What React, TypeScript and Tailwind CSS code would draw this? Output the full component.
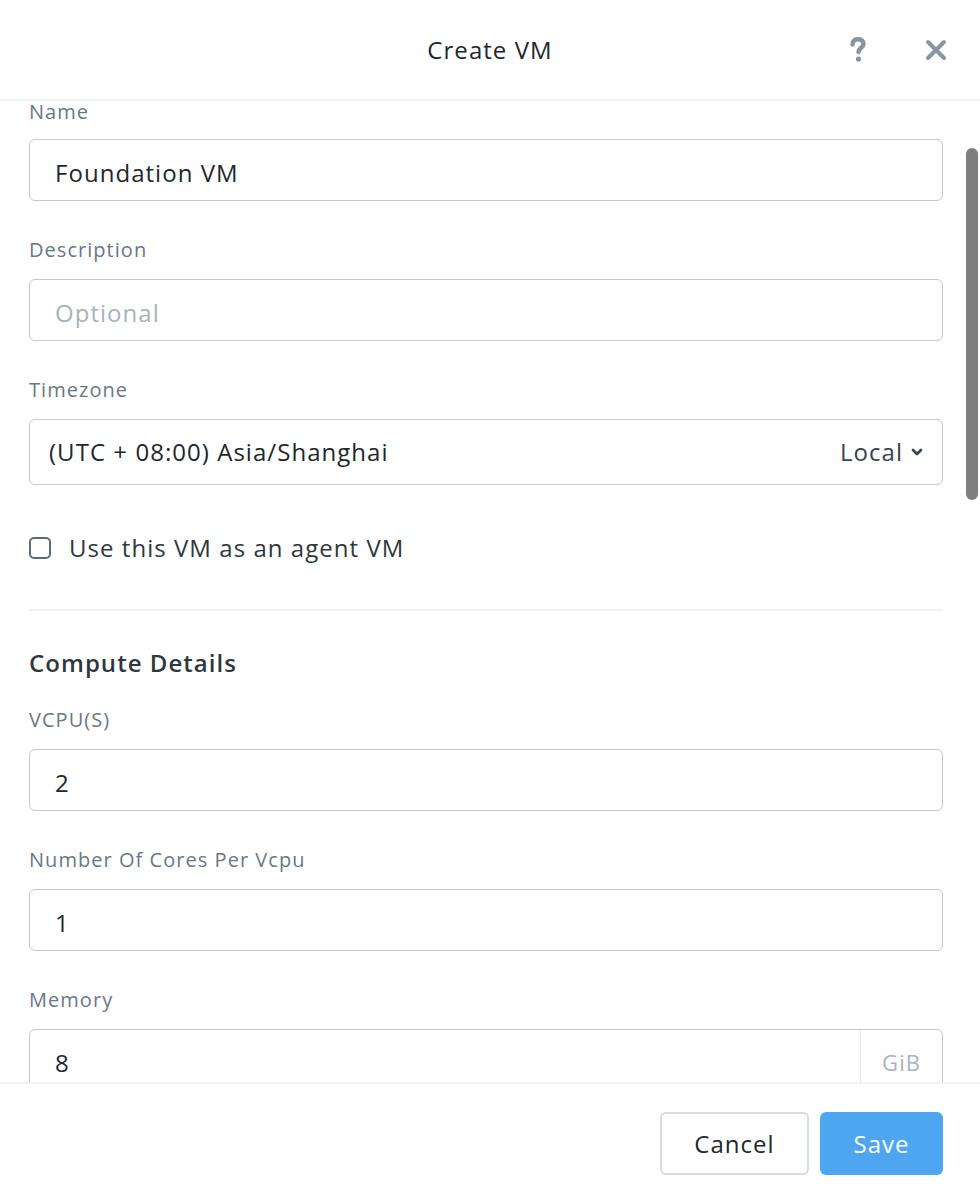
import { ChevronDown } from "lucide-react";

const font = { fontFamily: "'Open Sans', Lato, sans-serif" };

function Label({ children, tight }: { children: React.ReactNode; tight?: boolean }) {
  return (
    <div className={`text-[20px] text-[#6b7785] ${tight ? "leading-[22px]" : "leading-6"}`}>
      {children}
    </div>
  );
}

function Field({
  label,
  value,
  placeholder,
  suffix,
  first,
  className = "mt-[37px]",
}: {
  label: string;
  value?: string;
  placeholder?: string;
  suffix?: string;
  first?: boolean;
  className?: string;
}) {
  return (
    <div className={first ? "" : className}>
      <Label tight={first}>{label}</Label>
      <div
        className={`${first ? "mt-[16px]" : "mt-[17px]"} flex h-[62px] items-center rounded-md border border-[#c3c8cf] bg-white`}
      >
        <div className="flex-1 px-[25px] pt-[5px] text-[24px]">
          {value ? (
            <span className="text-[#22272e]">{value}</span>
          ) : (
            <span className="text-[#aab2bc]">{placeholder}</span>
          )}
        </div>
        {suffix && (
          <div className="flex h-full items-center border-l border-[#e3e6ea] px-[21px] pt-[5px] text-[22px] text-[#aab2bc]">
            {suffix}
          </div>
        )}
      </div>
    </div>
  );
}

export default function App() {
  return (
    <div
      style={font}
      className="flex h-[1184px] w-[980px] flex-col bg-white tracking-[0.065em] text-[#22272e]"
    >
      {/* Header */}
      <div className="relative flex h-[101px] shrink-0 items-center justify-center border-b-2 border-[#f1f2f4]">
        <h1 className="text-[24px] text-[#22272e]">Create VM</h1>
        <div className="absolute right-[33px] top-[37px] flex items-center gap-[58px]">
          <svg width="18" height="26" viewBox="0 0 18 26">
            <path
              d="M3.5 7.5 C3.5 4 6 2.2 9 2.2 C12.3 2.2 14.5 4 14.5 7 C14.5 10.5 9.5 11 9.5 15"
              stroke="#8896a4"
              strokeWidth="4.5"
              fill="none"
              strokeLinecap="round"
            />
            <circle cx="9.5" cy="22" r="2.6" fill="#8896a4" />
          </svg>
          <svg width="22" height="22" viewBox="0 0 22 22">
            <path d="M3 3 L19 19 M19 3 L3 19" stroke="#8896a4" strokeWidth="4" strokeLinecap="round" />
          </svg>
        </div>
      </div>

      {/* Body */}
      <div className="relative flex-1 overflow-hidden">
        <div className="absolute right-[2px] top-[47px] h-[352px] w-[12px] rounded-full bg-[#7f7f7f]" />
        <div className="pl-[29px] pr-[37px]">
          <Field first label="Name" value="Foundation VM" />
          <Field label="Description" placeholder="Optional" />

          <div className="mt-[37px]">
            <Label>Timezone</Label>
            <div className="mt-[17px] flex h-[66px] items-center justify-between rounded-md border border-[#c3c8cf] pl-[19px] pr-[17px] text-[24px]">
              <span className="text-[#22272e]">(UTC + 08:00) Asia/Shanghai</span>
              <span className="flex items-center gap-[6px] text-[#3a424c]">
                Local
                <ChevronDown size={16} strokeWidth={4} />
              </span>
            </div>
          </div>

          <label className="mt-[45px] flex items-center gap-[18px]">
            <span className="h-[22px] w-[22px] rounded-[5px] border-2 border-[#5f6b78]" />
            <span className="text-[24px] text-[#2f3740]">Use this VM as an agent VM</span>
          </label>

          <div className="mt-[43px] h-[2px] bg-[#f0f1f3]" />

          <h2 className="mt-[38px] text-[24px] font-semibold leading-7 text-[#2f3740]">Compute Details</h2>

          <Field label="VCPU(S)" value="2" className="mt-[31px]" />
          <Field label="Number Of Cores Per Vcpu" value="1" />
          <Field label="Memory" value="8" suffix="GiB" />
        </div>
      </div>

      {/* Footer */}
      <div className="flex h-[102px] shrink-0 items-start justify-end gap-[11px] border-t-2 border-[#f1f2f4] pr-[37px] pt-[28px]">
        <button className="h-[63px] w-[149px] rounded-md border-2 border-[#d8dbe0] text-[24px] text-[#22272e]">
          Cancel
        </button>
        <button className="h-[63px] w-[123px] rounded-md bg-[#4da6ef] text-[24px] text-white">
          Save
        </button>
      </div>
    </div>
  );
}
